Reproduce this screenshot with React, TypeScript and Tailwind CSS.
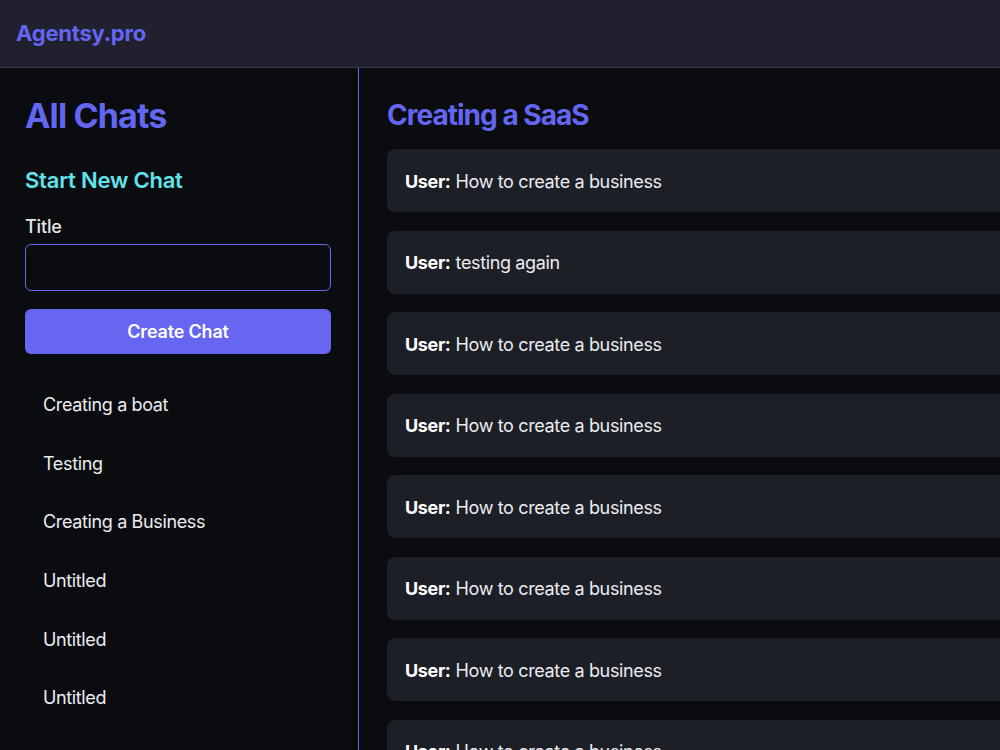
import { useState } from "react";

const chats = [
  "Creating a boat",
  "Testing",
  "Creating a Business",
  "Untitled",
  "Untitled",
  "Untitled",
];

const messages = [
  "How to create a business",
  "testing again",
  "How to create a business",
  "How to create a business",
  "How to create a business",
  "How to create a business",
  "How to create a business",
  "How to create a business",
];

export default function App() {
  const [title, setTitle] = useState("");

  return (
    <div
      className="h-[750px] w-[1000px] overflow-hidden bg-[#0b0c10] text-[#ececf1]"
      style={{ fontFamily: "Inter, 'Noto Sans', sans-serif" }}
    >
      <header className="flex h-[68px] items-center border-b border-[#383a4d] bg-[#21202e] px-4">
        <span className="text-[22px] font-bold tracking-[-0.01em] text-[#6366f1]">Agentsy.pro</span>
      </header>

      <div className="flex h-[682px]">
        {/* sidebar */}
        <aside className="w-[359px] shrink-0 border-r border-[#6366f1] pl-[25px] pr-[27px] pt-[28px]">
          <h1 className="text-[34px] leading-10 font-bold tracking-tight text-[#6366f1]">All Chats</h1>

          <h2 className="mt-[28px] text-[22px] leading-8 font-semibold tracking-[-0.01em] text-[#5fe5ec]">
            Start New Chat
          </h2>

          <label className="mt-[17px] block text-[18px] leading-7 font-medium tracking-[-0.01em] text-[#e6e6ea]">
            Title
          </label>
          <input
            value={title}
            onChange={(e) => setTitle(e.target.value)}
            className="mt-[3px] h-[47px] w-full rounded-md border border-[#6366f1] bg-transparent px-3 text-[18px] outline-none"
          />
          <button className="mt-[18px] h-[45px] w-full rounded-md bg-[#6766f1] text-[18px] font-semibold tracking-[-0.01em] text-white">
            Create Chat
          </button>

          <ul className="mt-[21px]">
            {chats.map((c, i) => (
              <li
                key={i}
                className="flex h-[58.7px] items-center px-[18px] text-[18px] tracking-[-0.02em] text-[#ececf0]"
              >
                {c}
              </li>
            ))}
          </ul>
        </aside>

        {/* conversation */}
        <main className="min-w-0 flex-1 pl-[28px] pt-[29px]">
          <h2 className="text-[28px] leading-9 font-bold tracking-[-0.035em] text-[#6366f1]">Creating a SaaS</h2>
          <div className="mt-[16px] flex w-[760px] flex-col gap-[18.5px]">
            {messages.map((m, i) => (
              <div
                key={i}
                className="flex h-[63px] shrink-0 items-center rounded-lg bg-[#1d1f26] px-[18px] pt-px text-[18px] tracking-[-0.02em]"
              >
                <span className="mr-[5px] font-bold text-white">User:</span>
                <span className="text-[#ececf0]">{m}</span>
              </div>
            ))}
          </div>
        </main>
      </div>
    </div>
  );
}
